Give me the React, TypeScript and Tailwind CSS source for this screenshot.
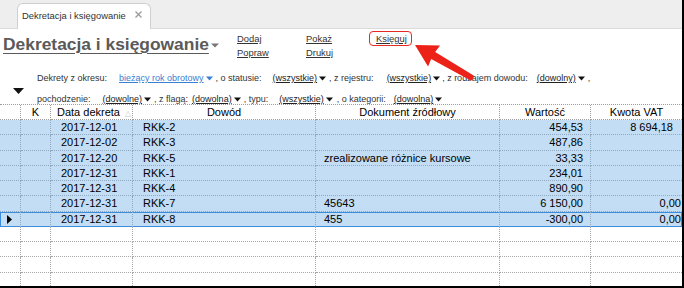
import React from 'react';

const font = { fontFamily: '"Liberation Sans", Arial, sans-serif' };

const COLS = 'grid grid-cols-[21px_30px_82px_183px_184px_91px_91px]';

type Row = { date: string; doc: string; src: string; val: string; vat: string; vatPad?: boolean };

const rows: Row[] = [
  { date: '2017-12-01', doc: 'RKK-2', src: '', val: '454,53', vat: '8 694,18', vatPad: true },
  { date: '2017-12-02', doc: 'RKK-3', src: '', val: '487,86', vat: '' },
  { date: '2017-12-20', doc: 'RKK-5', src: 'zrealizowane różnice kursowe', val: '33,33', vat: '' },
  { date: '2017-12-31', doc: 'RKK-1', src: '', val: '234,01', vat: '' },
  { date: '2017-12-31', doc: 'RKK-4', src: '', val: '890,90', vat: '' },
  { date: '2017-12-31', doc: 'RKK-7', src: '45643', val: '6 150,00', vat: '0,00' },
  { date: '2017-12-31', doc: 'RKK-8', src: '455', val: '-300,00', vat: '0,00' },
];

function Caret({ color = '#111' }: { color?: string }) {
  return (
    <svg width="7" height="5" viewBox="0 0 7 5" className="inline-block ml-[2px]">
      <path d="M0 0.5 L7 0.5 L3.5 4.5 Z" fill={color} />
    </svg>
  );
}

function Val({ children, blue }: { children: React.ReactNode; blue?: boolean }) {
  return (
    <span className="flex items-center">
      <span className={blue ? 'text-[#3a80d2] underline decoration-[#3a80d2]' : 'text-[#222] underline'}>{children}</span>
      <Caret color={blue ? '#3a80d2' : '#111'} />
    </span>
  );
}

export default function App() {
  const cell = 'border-r border-b border-dotted h-[15.25px] leading-[15px] whitespace-nowrap overflow-hidden';
  return (
    <div className="relative w-[684px] h-[288px] bg-white border-r-2 border-b-2 border-black overflow-hidden flex flex-col text-[#222]" style={font}>
      {/* tab bar */}
      <div className="h-[29px] shrink-0 bg-[#eeeeee] border-b border-[#dadada] pl-[17px] pt-[3px]">
        <div className="w-[134px] h-[26px] bg-white border border-b-0 border-[#cfcfcf] rounded-t-[6px] flex items-center justify-between pl-[4px] pr-[8px]">
          <span className="text-[9.4px] text-[#333]">Dekretacja i księgowanie</span>
          <svg width="7" height="7" viewBox="0 0 7 7" className="-mt-[5px]">
            <path d="M0.5 0.5 L6.5 6.5 M6.5 0.5 L0.5 6.5" stroke="#9a9a9a" strokeWidth="1.3" />
          </svg>
        </div>
      </div>

      {/* title + actions */}
      <div className="h-[44px] shrink-0 flex items-start pt-[3px]">
        <div className="w-[237px] pl-[3px] flex items-center mt-[1px]">
          <span className="text-[17.4px] font-bold leading-[22px] text-[#5a5a5a] underline decoration-1 underline-offset-[3px]">
            Dekretacja i księgowanie
          </span>
          <svg width="8" height="5" viewBox="0 0 8 5" className="ml-[2px] mt-[2px]">
            <path d="M0 0.5 L8 0.5 L4 4.5 Z" fill="#777" />
          </svg>
        </div>
        <div className="w-[69px] flex flex-col text-[9.4px] leading-[14px] text-[#333]">
          <span className="underline">Dodaj</span>
          <span className="underline">Popraw</span>
        </div>
        <div className="w-[63px] flex flex-col text-[9.4px] leading-[14px] text-[#333]">
          <span className="underline">Pokaż</span>
          <span className="underline">Drukuj</span>
        </div>
        <div className="-mt-[1px] border-[1.5px] border-[#e62a22] rounded-[4px] pl-[6px] pr-[4px] text-[9.4px] leading-[13px] text-[#333]">
          <span className="underline">Księguj</span>
        </div>
      </div>

      {/* filters */}
      <div className="h-[31px] shrink-0 flex text-[9px] leading-[10px] text-[#333]">
        <div className="w-[37px] pl-[13px] pt-[15px]">
          <svg width="11" height="6" viewBox="0 0 11 6">
            <path d="M0 0 L11 0 L5.5 6 Z" fill="#111" />
          </svg>
        </div>
        <div className="flex flex-col gap-[11px]">
          <div className="flex items-center h-[10px] whitespace-nowrap">
            <span>Dekrety z okresu:</span>
            <span className="ml-[12px]"><Val blue>bieżący rok obrotowy</Val></span>
            <span className="ml-[3px]">, o statusie:</span>
            <span className="ml-[11px]"><Val>(wszystkie)</Val></span>
            <span className="ml-[3px]">, z rejestru:</span>
            <span className="ml-[13px]"><Val>(wszystkie)</Val></span>
            <span className="ml-[2px]">, z rodzajem dowodu:</span>
            <span className="ml-[9px]"><Val>(dowolny)</Val></span>
            <span className="ml-[3px]">,</span>
          </div>
          <div className="flex items-center h-[10px] whitespace-nowrap">
            <span>pochodzenie:</span>
            <span className="ml-[12px]"><Val>(dowolne)</Val></span>
            <span className="ml-[3px]">, z flagą:</span>
            <span className="ml-[4px]"><Val>(dowolna)</Val></span>
            <span className="ml-[3px]">, typu:</span>
            <span className="ml-[11px]"><Val>(wszystkie)</Val></span>
            <span className="ml-[4px]">, o kategorii:</span>
            <span className="ml-[8px]"><Val>(dowolna)</Val></span>
          </div>
        </div>
      </div>

      {/* grid */}
      <div className="text-[11px] text-black">
        <div className={`${COLS} border-t border-dotted border-[#9d9d9d] bg-white`}>
          {[
            { t: '', c: '' },
            { t: 'K', c: 'text-center' },
            { t: 'Data dekreta', c: 'pl-[6px]' },
            { t: 'Dowód', c: 'text-center' },
            { t: 'Dokument źródłowy', c: 'text-center' },
            { t: 'Wartość', c: 'text-center' },
            { t: 'Kwota VAT', c: 'text-center' },
          ].map((h, i) => (
            <div key={i} className={`border-r border-b border-dotted border-[#9d9d9d] h-[15px] leading-[15px] whitespace-nowrap ${h.c} ${i === 6 ? 'border-r-0' : ''}`}>
              {h.t}
              {i === 2 && <span className="ml-[5px] text-[8px] text-[#c8c8c8]">△</span>}
            </div>
          ))}
        </div>

        {rows.map((r, idx) => {
          const sel = idx === rows.length - 1;
          const b = sel ? 'border-b-0 border-[#8fa9c2]' : 'border-[#8fa9c2]';
          return (
            <div
              key={idx}
              className={`${COLS} bg-[#c3ddf5] ${sel ? 'shadow-[inset_0_0_0_1px_#3b8ddc]' : ''}`}
            >
              <div className={`${cell} ${b} flex items-center pl-[7px]`}>
                {sel && (
                  <svg width="5" height="9" viewBox="0 0 5 9">
                    <path d="M0 0 L5 4.5 L0 9 Z" fill="#000" />
                  </svg>
                )}
              </div>
              <div className={`${cell} ${b}`} />
              <div className={`${cell} ${b} pl-[10px]`}>{r.date}</div>
              <div className={`${cell} ${b} pl-[10px]`}>{r.doc}</div>
              <div className={`${cell} ${b} pl-[8px]`}>{r.src}</div>
              <div className={`${cell} ${b} text-right pr-[7px]`}>{r.val}</div>
              <div className={`${cell} ${b} border-r-0 text-right ${r.vatPad ? 'pr-[9px]' : 'pr-[1px]'}`}>{r.vat}</div>
            </div>
          );
        })}

        {[0, 1, 2, 3].map((k) => (
          <div key={k} className={`${COLS} bg-white`}>
            {[0, 1, 2, 3, 4, 5, 6].map((c) => (
              <div key={c} className={`${cell} border-[#a8a8a8] ${c === 6 ? 'border-r-0' : ''}`} />
            ))}
          </div>
        ))}
      </div>

      {/* annotation arrow */}
      <svg className="absolute left-0 top-0 pointer-events-none" width="684" height="288">
        <g transform="translate(415 45) rotate(30)">
          <path d="M0 0 L22 -12 L21 -4 L66 -3 Q68 0 66 3 L21 4 L22 12 Z" fill="#ec2118" />
        </g>
      </svg>
    </div>
  );
}
